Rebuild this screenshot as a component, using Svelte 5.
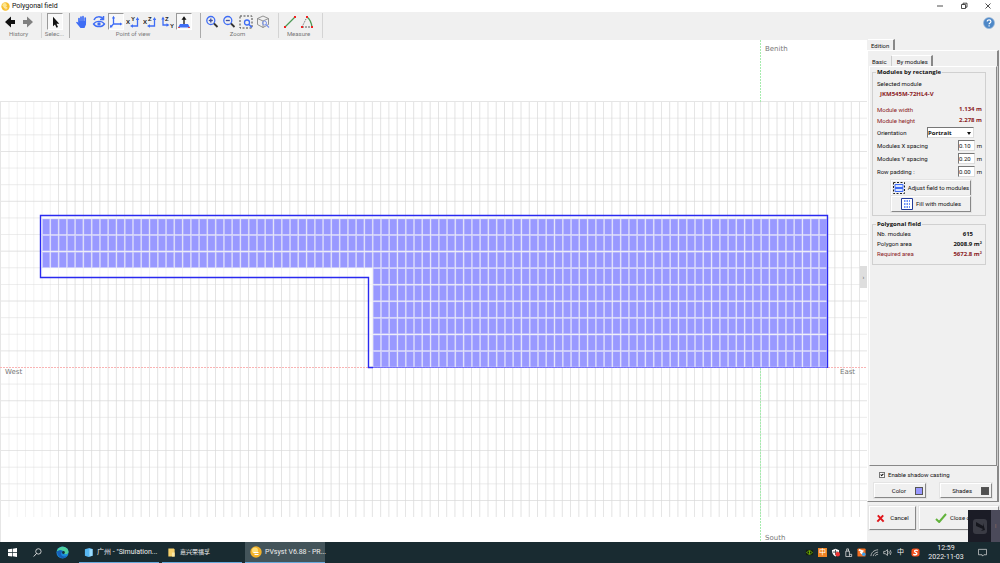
<script>
  const COLS = 95;
  const PITCH_X = 8.265;
  const PITCH_Y = 16.58;
  const AXIS_ROW = 16;
  const gridX = Array.from({ length: 104 }, (_, i) => 760.5 - 8.258 * (91 - i));
  const gridY = Array.from({ length: 25 }, (_, i) => 327.5 + 16.62 * (i - AXIS_ROW));

  const modules = [];
  for (let r = 0; r < 9; r++) {
    for (let c = r < 3 ? 0 : 40; c < COLS; c++) {
      modules.push({ x: 42.6 + c * PITCH_X, y: 179 + r * PITCH_Y });
    }
  }

  const toolGroups = [
    { label: "History", cls: "history", tools: ["back", "forward"] },
    { label: "Selec...", cls: "select", tools: ["pointer"] },
    { label: "Point of view", cls: "view", tools: ["hand", "orbit", "axes", "xy", "xz", "zy", "up"] },
    { label: "Zoom", cls: "zoom", tools: ["zoomin", "zoomout", "zoombox", "cube"] },
    { label: "Measure", cls: "measure", tools: ["distance", "angle"] }
  ];
  const names = { xy: ["X", "Y"], xz: ["X", "Z"], zy: ["Y", "Z"] };

  let active = "pointer";
  let orientation = "Portrait";
  let spacingX = "0.10";
  let spacingY = "0.20";
  let padding = "0.00";
  let shadows = true;
</script>

<div class="window">
  <header class="titlebar">
    <svg class="logo" viewBox="0 0 10 10"><circle cx="5" cy="5" r="4.6" fill="#f6bd2c" /><circle cx="4" cy="3.5" r="2.4" fill="#fde58e" /><path d="M3 6h4M4 7.5h3" stroke="#fff" stroke-width=".7" /></svg>
    <span class="title">Polygonal field</span>
    <button class="win" aria-label="Minimize"><svg viewBox="0 0 8 8"><path d="M1 4h6" /></svg></button>
    <button class="win" aria-label="Restore"><svg viewBox="0 0 8 8"><path d="M1.5 2.5h4v4h-4zM3 2.5V1.2h4v4H5.5" /></svg></button>
    <button class="win" aria-label="Close"><svg viewBox="0 0 8 8"><path d="M1.5 1.5l5 5M6.5 1.5l-5 5" /></svg></button>
  </header>

  <nav class="toolbar">
    {#each toolGroups as group}
      <div class="group {group.cls}">
        <div class="tools">
          {#each group.tools as tool}
            <button
              class="tool"
              class:pressed={tool === active || tool === "axes" || tool === "up"}
              aria-label={tool}
              on:click={() => (active = tool)}
            >
              <svg viewBox="0 0 14 14" fill="none" stroke-width="1.3">
                {#if tool === "back"}
                  <path d="M2 7L8 1.5V5h4v4H8v3.5z" fill="#111" />
                {:else if tool === "forward"}
                  <path d="M13 7L7 1.5V5H3v4h4v3.5z" fill="#808080" />
                {:else if tool === "pointer"}
                  <path d="M5 1.8v9.400l2-1.800 1.500 3.400 1.500-.7-1.500-3.300h2.800z" fill="#111" />
                {:else if tool === "hand"}
                  <path d="M4 8V3.500M6 7V2M8 7V1.700M10.200 8V3" stroke="#3f6df5" stroke-linecap="round" stroke-width="1.700" />
                  <path d="M1 7.500l1-.8 2 1.500V6h7v3.500L9.500 13h-4z" fill="#3f6df5" />
                {:else if tool === "orbit"}
                  <path d="M2 5c1.500-4 7-4 9-1M11.500 1v3.500H8" stroke="#3f6df5" stroke-width="1.500" />
                  <path d="M1.500 9c2.500-3.500 8.500-3.500 11 0-2.500 3.500-8.500 3.500-11 0z" stroke="#3f6df5" />
                  <circle cx="7" cy="9" r="1.700" fill="#3f6df5" />
                {:else if tool === "axes"}
                  <path d="M4.500 2v7H12M4.500 9l-3 3" stroke="#3f6df5" />
                  <path d="M4.500 .8L3 3.500h3zM13.500 9l-2.500-1.500v3zM.8 12.800l.5-3 2.500 2.200z" fill="#3f6df5" />
                {:else if names[tool]}
                  {#if tool === "zy"}
                    <path d="M3 3v7h5" stroke="#3f6df5" />
                    <path d="M3 1.500L1.300 4.500h3.400zM9.500 10l-3-1.700v3.400z" fill="#3f6df5" />
                    <text x="5" y="6">Z</text><text x="10" y="13">Y</text>
                  {:else}
                    <path d="M6 11h5.500V4" stroke="#3f6df5" />
                    <path d="M11.500 2L9.800 5h3.400zM4 11l3-1.700v3.400z" fill="#3f6df5" />
                    <text x="0" y="9">{names[tool][0]}</text><text x="5" y="6">{names[tool][1]}</text>
                  {/if}
                {:else if tool === "up"}
                  <path d="M3 9h8l2 3.500H1z" fill="#3f6df5" />
                  <path d="M1 12.500h12" stroke="#d33" stroke-width=".8" stroke-dasharray="2 8" />
                  <path d="M7 9V3" stroke="#111" /><path d="M4.500 4.800L7 1.200l2.500 3.600z" fill="#111" />
                {:else if tool === "zoomin" || tool === "zoomout"}
                  <circle cx="5.800" cy="5.500" r="4" stroke="#3f6df5" />
                  <path d="M3.800 5.500h4" stroke="#3f4f9b" />
                  {#if tool === "zoomin"}<path d="M5.800 3.500v4" stroke="#3f4f9b" />{/if}
                  <path d="M9 8.500l3.500 3.500" stroke="#333" stroke-width="1.800" />
                {:else if tool === "zoombox"}
                  <path d="M1 1h12v12H1z" stroke="#444" stroke-width="1" stroke-dasharray="2 1.500" />
                  <circle cx="8" cy="7.500" r="2.500" stroke="#3f6df5" /><path d="M10 9.500l3 3" stroke="#3f6df5" stroke-width="1.500" />
                {:else if tool === "cube"}
                  <path d="M7 1l5.500 2.500v6L7 12.500 1.500 9.500v-6zM1.500 3.500L7 6l5.500-2.500M7 6v6.500" stroke="#888" stroke-width=".9" />
                  <circle cx="8.500" cy="8" r="2" stroke="#7b95ee" stroke-width="1" /><path d="M10 9.500l3 3" stroke="#7b95ee" />
                {:else if tool === "distance"}
                  <path d="M2 12L12 2" stroke="#4d9955" /><path d="M1 11h2v2H1zM11 1h2v2h-2z" fill="#e22" />
                {:else}
                  <path d="M2 12L7 2" stroke="#777" stroke-width="1" stroke-dasharray="1.500 1" /><path d="M2 12h10" stroke="#333" stroke-dasharray="2 1" stroke-width=".8" /><path d="M7 2q4 3 5 10" stroke="#4d9955" />
                  <path d="M1 11h2v2H1zM11 11h2v2h-2zM6 1h2v2H6z" fill="#e22" />
                {/if}
              </svg>
            </button>
          {/each}
        </div>
        <span class="caption">{group.label}</span>
      </div>
    {/each}
    <button class="help" aria-label="Help"><svg viewBox="0 0 12 12"><circle cx="6" cy="6" r="5.500" fill="#4d87c7" stroke="#9ab8da" stroke-width=".7" /><path d="M4.200 4.600c0-2.300 3.700-2.300 3.700 0 0 1.400-1.800 1.300-1.800 2.600M6.100 8.300v1.200" stroke="#fff" fill="none" stroke-width="1.200" /></svg></button>
  </nav>

  <main>
    <section class="scene">
      <svg viewBox="0 0 867 502" preserveAspectRatio="xMidYMid slice">
        <g stroke="#d9d9d9" stroke-width="0.8">
          {#each gridX as x, i}
            <path d="M{x} 62V477" opacity={i < 6 ? 0.4 : 0.9} />
          {/each}
          {#each gridY as y, i}
            {#if i !== AXIS_ROW}
              <path d="M0 {y}H867" opacity={i % 3 ? 0.6 : 0.9} />
            {/if}
          {/each}
        </g>
        <path d="M0.5 62V502" stroke="#e6e6e6" />
        <path d="M0 327.5H867" stroke="#f9b4b4" stroke-dasharray="2 1" />
        <path d="M760.5 0V62M760.5 328V502" stroke="#a5ecad" stroke-dasharray="2 1" />
        <path d="M40.5 175.5H827.5V327.5H368.5V237.5H40.5z" fill="#fff" fill-opacity=".6" />
        {#each modules as m}
          <rect x={m.x} y={m.y} width="7.2" height="15.3" fill="#9999ff" stroke="#c6c6fb" stroke-width="0.5" />
        {/each}
        <path d="M368.5 327.5H827.5" stroke="#5a5aff" stroke-width=".8" />
        <path d="M827.5 328V175.5H40.5V237.5H368.5V327.5H373" fill="none" stroke="#2a2af0" stroke-width="1.4" />
        <g class="compass">
          <text x="765" y="11">Benith</text>
          <text x="765" y="500">South</text>
          <text x="5" y="334">West</text>
          <text x="840" y="334">East</text>
        </g>
      </svg>
      <button class="splitter" aria-label="Collapse panel">›</button>
    </section>

    <aside>
      <div class="tabs"><button class="tab on">Edition</button></div>
      <div class="page outer">
        <div class="tabs inner"><button class="tab">Basic</button><button class="tab on">By modules</button></div>
        <div class="page sheet">
          <fieldset class="rect">
            <legend>Modules by rectangle</legend>
            <p class="line first">Selected module</p>
            <p class="line model">JKM545M-72HL4-V</p>
            <p class="line red size"><span>Module width</span><b>1.134 m</b></p>
            <p class="line red"><span>Module height</span><b>2.278 m</b></p>
            <div class="field">
              <label for="orientation">Orientation</label>
              <div class="combo">
                <select id="orientation" bind:value={orientation}><option>Portrait</option><option>Landscape</option></select>
              </div>
            </div>
            <div class="field"><label for="sx">Modules X spacing</label><input id="sx" bind:value={spacingX}><span class="unit">m</span></div>
            <div class="field"><label for="sy">Modules Y spacing</label><input id="sy" bind:value={spacingY}><span class="unit">m</span></div>
            <div class="field"><label for="rp">Row padding :</label><input id="rp" bind:value={padding}><span class="unit">m</span></div>
            <div class="actions">
              <button class="btn"><svg viewBox="0 0 12 12"><path d="M.5 .5h11v11H.5z" fill="none" stroke="#222" stroke-dasharray="2 1.500" /><path d="M2 2.500h8v3H2zM2 6.500h8v3H2z" fill="#dce6ff" stroke="#3f6df5" /></svg>Adjust field to modules</button>
              <button class="btn"><svg viewBox="0 0 12 12"><path d="M.5 .5h11v11H.5z" fill="#fff" stroke="#223a99" /><path d="M3 3h6M3 6h6M3 9h6" stroke="#3f6df5" stroke-width="1.500" stroke-dasharray="1.500 1" /></svg>Fill with modules</button>
            </div>
          </fieldset>
          <fieldset class="stats">
            <legend>Polygonal field</legend>
            <p class="line"><span>Nb. modules</span><b class="count">615</b></p>
            <p class="line"><span>Polygon area</span><b>2008.9 m²</b></p>
            <p class="line red"><span>Required area</span><b>5672.8 m²</b></p>
          </fieldset>
        </div>
        <div class="display">
          <label class="check"><input type="checkbox" bind:checked={shadows}>Enable shadow casting</label>
          <div class="swatches">
            <button class="btn">Color<i class="blue"></i></button>
            <button class="btn">Shades<i class="dark"></i></button>
          </div>
        </div>
      </div>
      <div class="confirm">
        <button class="btn"><svg viewBox="0 0 10 10"><path d="M2 1.500l6.500 7M8 1.500l-6.500 7" stroke="#e0161b" stroke-width="2.200" /></svg>Cancel</button>
        <button class="btn close"><svg viewBox="0 0 12 10"><path d="M1 6l3.200 3L11 1" fill="none" stroke="#62b33c" stroke-width="2" /></svg>Close only</button>
      </div>
      <div class="floating">
        <svg viewBox="0 0 23 32"><rect x="5" y="9" width="14" height="15" rx="3" fill="#3a3b44" /><path d="M8 12l7 4v-3l2 7-4 1 2-2-7-3z" fill="#15161d" /></svg>
        <span>⁞</span>
      </div>
    </aside>
  </main>

  <footer>
    <button class="task" aria-label="Start"><svg viewBox="0 0 10 10"><path d="M0 1.500l4.500-.7v4H0zM5.200 .7L10 0v4.800H5.200zM0 5.500h4.500v4L0 8.800zM5.200 5.500H10V10l-4.800-.7z" fill="#fff" /></svg></button>
    <button class="task" aria-label="Search"><svg viewBox="0 0 10 10"><circle cx="6" cy="3.800" r="3" fill="none" stroke="#eee" stroke-width=".9" /><path d="M4 6L.8 9.500" stroke="#eee" /></svg></button>
    <button class="task edge" aria-label="Edge"><svg viewBox="0 0 14 14"><circle cx="7" cy="7" r="6.500" fill="#1a8ad8" /><path d="M1 6c1-6.500 11.500-7 12.500 0 .2 3-3.500 3.500-5 2 1.500-3-3-5-7.500-2z" fill="#4fd0a0" /><path d="M1 6c4-2.500 6.500-1 5 1-2 3 2 5.500 6 3.500C9 15 2 14 1 6z" fill="#1560b8" /><circle cx="8" cy="7" r="1.500" fill="#16303b" /></svg></button>
    <button class="task app"><svg viewBox="0 0 10 10"><path d="M1 1.500L6 0l3.500 1v7.500L5 10 1 8.500z" fill="#59b8f2" /><path d="M6 1.500L9.500 1v7.500L6 9.500z" fill="#9bdcff" /></svg>广州 - "Simulation...</button>
    <button class="task app"><svg viewBox="0 0 10 10"><path d="M1.500 .5h6l1 1V9.500h-7z" fill="#f6d06b" /><path d="M5.500 5h3v4.500h-3z" fill="#fbe7a6" /></svg><span class="folder">嘉兴荣福孚</span></button>
    <button class="task app current"><svg class="sun" viewBox="0 0 12 12"><circle cx="6" cy="6" r="5.700" fill="#f3b229" /><circle cx="5" cy="4.500" r="3" fill="#ffdf78" /><path d="M3.500 6.500h5M4.500 8.500h4" stroke="#fff" /></svg>PVsyst V6.88 - PR...</button>
    <div class="tray">
      <svg viewBox="0 0 10 10"><rect x="1" y="2" width="8" height="6" fill="#15210f" /><path d="M2 5c2-2.500 4-2.500 6 0-2 2.500-4 2.500-6 0zM5 3v4" fill="none" stroke="#76b900" /></svg>
      <span class="ime">中</span>
      <svg viewBox="0 0 10 10"><path d="M5 .8L9 2.500C9 6 7.500 8 5 9.500 2.500 8 1 6 1 2.500z" fill="#fff" /><path d="M5 2v6M2 4.500h6" stroke="#444" /><circle cx="7.500" cy="7" r="2.500" fill="#e33" /></svg>
      <svg viewBox="0 0 10 10"><path d="M2 3.500h4V9.500H2zM3 3.500V1h2v2.500M6 7h2.500V9.500H6" fill="none" stroke="#eee" stroke-width=".8" /></svg>
      <svg viewBox="0 0 10 10"><rect x=".5" y=".5" width="9" height="9" rx="1" fill="#f36f21" /><path d="M2 2l4 1.500L4.500 5 8 8" stroke="#fff" stroke-width="2" fill="none" /><circle cx="7.500" cy="7" r="2" fill="#3d9fe8" /></svg>
      <svg viewBox="0 0 10 10"><path d="M1 9C1.500 5 4 2.500 9 2M3.500 9C4 7 5.500 5 9 4.500M6 9c.5-1.500 1-2 3-2" fill="none" stroke="#ccc" stroke-width=".9" /></svg>
      <svg viewBox="0 0 10 10"><path d="M.8 3.800h1.700L5 1.800v6.500L2.500 6.300H.8zM6.500 3.500q1 1.500 0 3M8 2.200q2 2.800 0 5.600" fill="none" stroke="#ddd" stroke-width=".8" /></svg>
      <span>中</span>
      <svg class="sogou" viewBox="0 0 10 10"><rect x=".5" y=".5" width="9" height="9" rx="2.500" fill="#f4511e" /><path d="M7.500 3C5 1.500 2.500 3.500 5 4.800 8 6 6 8.500 2.500 7" fill="none" stroke="#fff" stroke-width="1.500" /></svg>
    </div>
    <div class="clock"><span>12:59</span><span>2022-11-03</span></div>
    <button class="task note" aria-label="Notifications"><svg viewBox="0 0 10 10"><path d="M.5 1.500h9v6h-3L5 9 4.500 7.500h-4z" fill="none" stroke="#ddd" stroke-width=".8" /></svg></button>
  </footer>
</div>

<style>
  .window {
    display: grid;
    grid-template-rows: 12px 27px minmax(0, 1fr) 21px;
    height: 100vh;
    background: #f0f0f0;
    color: #111;
    font: 6px/10px Roboto, "Noto Sans CJK SC", sans-serif;
    white-space: nowrap;
    overflow: hidden;
  }
  button, input, select {
    font: inherit;
    color: inherit;
    margin: 0;
    padding: 0;
    border: 0;
    background: none;
    box-sizing: border-box;
  }
  svg {
    display: block;
    flex: none;
  }
  p {
    margin: 0;
  }
  b, legend, select, .model {
    font-family: "Open Sans", sans-serif;
    font-weight: bold;
  }

  .titlebar {
    display: flex;
    align-items: center;
    background: #fff;
    font-size: 7px;
  }
  .logo {
    width: 9px;
    height: 9px;
    margin: 0 2px 0 1px;
  }
  .title {
    flex: 1;
  }
  .win {
    width: 24px;
    display: flex;
    justify-content: center;
  }
  .win svg {
    width: 8px;
    height: 8px;
    fill: none;
    stroke: #222;
    stroke-width: 0.8;
  }

  .toolbar {
    display: flex;
    align-items: flex-start;
  }
  .group {
    height: 25px;
    margin-top: 1px;
    border-right: 1px solid #d4d4d4;
    box-sizing: border-box;
    display: flex;
    flex-direction: column;
    align-items: center;
  }
  .history { width: 42px; padding-right: 4px; }
  .select { width: 28px; padding-right: 2px; border-color: #aaa; }
  .view { width: 131px; padding-right: 4px; border-color: #aaa; }
  .zoom { width: 78px; padding-right: 4px; }
  .measure { width: 44px; padding-right: 4px; }
  .tools {
    display: flex;
    gap: 1px;
  }
  .tool {
    width: 16px;
    height: 17px;
    border: 1px solid transparent;
    display: flex;
    justify-content: center;
    align-items: center;
  }
  .tool svg {
    width: 14px;
    height: 14px;
  }
  .tool text {
    font: bold 6px "Liberation Sans", sans-serif;
    fill: #222;
  }
  .pressed {
    background: #f8f8f8;
    border-color: #999 #fff #fff #999;
  }
  .caption {
    line-height: 8px;
    color: #777;
  }
  .help {
    margin: 5px 5px 0 auto;
  }
  .help svg {
    width: 12px;
    height: 12px;
  }

  main {
    display: grid;
    grid-template-columns: minmax(0, 1fr) 133px;
    min-height: 0;
  }
  .scene {
    position: relative;
    background: #fff;
    margin-top: 1px;
    min-height: 0;
  }
  .scene > svg {
    width: 100%;
    height: 100%;
  }
  .compass {
    font: 7px "DejaVu Sans", sans-serif;
    fill: #777;
  }
  .splitter {
    position: absolute;
    right: 0;
    top: 45%;
    width: 7px;
    height: 22px;
    background: #dedede;
    color: #555;
  }

  aside {
    position: relative;
    display: flex;
    flex-direction: column;
    min-width: 0;
    min-height: 0;
    overflow: hidden;
  }
  .tabs {
    display: flex;
    align-items: flex-end;
    height: 11px;
    padding-left: 1px;
    flex: none;
  }
  .tab {
    height: 10px;
    line-height: 9px;
    padding: 0 4px 0 3px;
    border-right: 1px solid #ccc;
  }
  .tab.on {
    height: 11px;
    border-right: 2px solid #888;
    border-top: 1px solid #fff;
  }
  .inner {
    height: 12px;
    padding-left: 0;
  }
  .inner .tab.on {
    padding: 0 3px 0 5px;
  }
  .page {
    display: flex;
    flex-direction: column;
    border-style: solid;
    border-color: #fff #888 #888 #fff;
  }
  .outer {
    flex: 1;
    min-height: 0;
    margin-right: 1px;
    padding: 3px 0 0 1px;
    border-width: 1px 2px 1px 1px;
  }
  .sheet {
    flex: 1;
    padding: 0 10px 0 2px;
    border-width: 1px;
    box-shadow: 1px 0 #ccc;
  }
  fieldset {
    margin: 0;
    padding: 0 3px 0 4px;
    border: 1px solid #d0d0d0;
    min-width: 0;
  }
  legend {
    padding: 0 1px;
    margin-left: -1px;
  }
  .rect {
    height: 149px;
    box-sizing: border-box;
  }
  .line {
    display: flex;
    justify-content: space-between;
    line-height: 11px;
  }
  .first {
    padding-top: 1px;
  }
  .model {
    padding-left: 3px;
    color: #8a1a24;
  }
  .size {
    padding-top: 4px;
  }
  .red {
    color: #8a1a24;
  }
  .count {
    padding-right: 9px;
  }
  .field {
    display: flex;
    align-items: center;
    height: 13px;
  }
  .field label {
    flex: 1;
  }
  .field input {
    width: 17px;
    height: 11px;
    background: #fff;
    border: 1px solid;
    border-color: #777 #ddd #ddd #777;
  }
  .unit {
    width: 7px;
    text-align: right;
  }
  .combo {
    position: relative;
    margin-right: 8px;
  }
  .combo::after {
    content: "";
    position: absolute;
    right: 3px;
    top: 5px;
    border: 2px solid transparent;
    border-top: 3px solid #111;
    pointer-events: none;
  }
  select {
    appearance: none;
    display: block;
    width: 47px;
    height: 11px;
    background: #fff;
    border: 1px solid;
    border-color: #777 #ddd #ddd #777;
  }
  .btn {
    display: flex;
    align-items: center;
    justify-content: center;
    gap: 3px;
    background: #f0f0f0;
    border: 1px solid;
    border-color: #fff #888 #888 #fff;
    box-shadow: 0 0 0 1px #e4e4e4;
  }
  .actions {
    margin: 2px 11px 0 14px;
  }
  .actions .btn {
    width: 100%;
    height: 16px;
  }
  .actions svg {
    width: 12px;
    height: 12px;
  }
  .stats {
    margin-top: 3px;
    height: 46px;
    box-sizing: border-box;
  }
  .stats .line {
    line-height: 10px;
  }
  .display {
    padding: 4px 5px 3px 5px;
  }
  .check {
    display: flex;
    align-items: center;
    gap: 3px;
    padding-left: 5px;
  }
  .check input {
    appearance: none;
    width: 6px;
    height: 6px;
    border: 1px solid #777;
    background: #fff;
  }
  .check input:checked::after {
    content: "";
    display: block;
    width: 1px;
    height: 2px;
    margin-left: 1px;
    border: solid #111;
    border-width: 0 1px 1px 0;
    transform: rotate(45deg);
  }
  .swatches {
    display: flex;
    justify-content: space-between;
    margin-top: 3px;
  }
  .swatches .btn {
    width: 52px;
    height: 15px;
    justify-content: flex-end;
    gap: 9px;
    padding-right: 2px;
  }
  .swatches i {
    width: 6px;
    height: 6px;
    border: 1px solid #555;
  }
  .blue { background: #9999ff; }
  .dark { background: #505050; }

  .confirm {
    display: flex;
    gap: 3px;
    height: 24px;
    padding: 4px 1px 12px 2px;
    flex: none;
  }
  .confirm .btn {
    width: 47px;
    gap: 5px;
  }
  .confirm .close {
    flex: 1;
    justify-content: flex-start;
    padding-left: 15px;
    gap: 3px;
  }
  .confirm svg {
    width: 9px;
    height: 9px;
  }
  .confirm .close svg {
    width: 12px;
    height: 10px;
  }
  .floating {
    position: absolute;
    right: 0;
    bottom: 0;
    display: flex;
    width: 32px;
    height: 32px;
    background: #1b1c26;
  }
  .floating svg {
    width: 23px;
    height: 32px;
  }
  .floating span {
    flex: 1;
    background: #4b4a5a;
    color: #d08a6a;
    line-height: 32px;
    text-align: center;
  }

  footer {
    display: flex;
    align-items: center;
    background: #192b31;
    color: #eee;
    font-size: 7px;
  }
  .task {
    display: flex;
    align-items: center;
    justify-content: center;
    width: 25px;
    height: 21px;
    flex: none;
  }
  .task svg {
    width: 9px;
    height: 9px;
  }
  .edge {
    margin-right: 4px;
  }
  .edge svg {
    width: 13px;
    height: 13px;
  }
  .app {
    width: 80px;
    margin-right: 3px;
    padding-left: 5px;
    justify-content: flex-start;
    gap: 4px;
    border-bottom: 1px solid #67a9dc;
  }
  .folder {
    font-size: 6px;
  }
  .current {
    background: #43545a;
  }
  .app .sun {
    width: 12px;
    height: 12px;
    margin-right: -1px;
  }
  .tray {
    display: flex;
    align-items: center;
    gap: 4px;
    margin-left: auto;
  }
  .tray svg, .tray span {
    width: 9px;
    height: 9px;
    line-height: 9px;
    text-align: center;
  }
  .tray .sogou {
    margin-left: 2px;
  }
  .ime {
    background: #f08424;
    color: #fff;
  }
  .clock {
    display: flex;
    flex-direction: column;
    align-items: center;
    width: 48px;
    line-height: 9px;
    margin-left: 2px;
  }
  .note {
    margin-right: 5px;
  }
</style>
